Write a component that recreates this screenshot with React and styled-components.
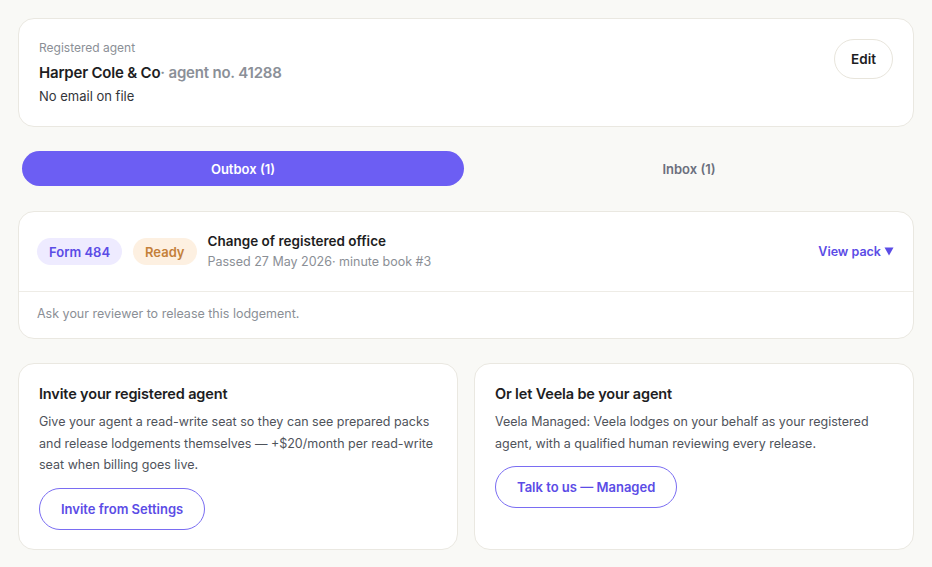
import styled, { createGlobalStyle } from 'styled-components';

const GlobalStyle = createGlobalStyle`
    body {
        margin: 0;
        background: #f9f9f6;
        font-family: Inter, "Noto Sans", sans-serif;
        color: #1d1d22;
    }
`;

const StyledPage = styled.div`
    display: flex;
    flex-direction: column;
    gap: 24px;
    padding: 18px;
`;

const StyledCard = styled.div`
    background: #fff;
    border: 1px solid #eae8e1;
    border-radius: 16px;
`;

const StyledAgentCard = styled(StyledCard)`
    display: flex;
    justify-content: space-between;
    align-items: flex-start;
    padding: 20px 20px 20px 20px;
`;

const StyledAgentInfo = styled.div`
    display: flex;
    flex-direction: column;
`;

const StyledLabel = styled.div`
    font-size: 12px;
    line-height: 18px;
    color: #8b8f96;
    margin-bottom: 5px;
`;

const StyledAgentName = styled.div`
    font-size: 15px;
    line-height: 22px;
    font-weight: 600;
    letter-spacing: -0.2px;
`;

const StyledMuted = styled.span`
    color: #8b9098;
    font-weight: 600;
`;

const StyledSmall = styled.div`
    font-size: 13px;
    line-height: 20px;
    margin-top: 2px;
    color: #33353a;
`;

const StyledPillButton = styled.button`
    font-family: inherit;
    background: #fff;
    border: 1px solid #e8e5dc;
    border-radius: 999px;
    height: 40px;
    padding: 0 16px;
    font-size: 13.5px;
    font-weight: 600;
    color: #1d1d22;
    cursor: pointer;
`;

const StyledTabs = styled.div`
    display: grid;
    grid-template-columns: 1fr 1fr;
    gap: 4px;
    padding: 0 4px 1px 4px;
`;

const StyledTab = styled.div`
    height: 35px;
    border-radius: 999px;
    display: flex;
    align-items: center;
    justify-content: center;
    font-size: 13px;
    font-weight: 600;
    background: ${p => (p.$active ? '#6c5ef3' : 'transparent')};
    color: ${p => (p.$active ? '#fff' : '#6b6f7d')};
`;

const StyledFormTop = styled.div`
    display: flex;
    align-items: center;
    padding: 19px 19px 19px 18px;
    border-bottom: 1px solid #eeece6;
`;

const StyledTag = styled.span`
    display: inline-flex;
    align-items: center;
    height: 27px;
    padding: 0 12px;
    border-radius: 999px;
    font-size: 13px;
    font-weight: 600;
    margin-right: 11px;
    background: ${p => (p.$tone === 'warn' ? '#fdf0e1' : '#eeebff')};
    color: ${p => (p.$tone === 'warn' ? '#c4803a' : '#5b4ce6')};
`;

const StyledFormText = styled.div`
    display: flex;
    flex-direction: column;
    flex: 1;
`;

const StyledFormTitle = styled.div`
    font-size: 13.5px;
    line-height: 20px;
    font-weight: 600;
`;

const StyledFormSub = styled.div`
    font-size: 12.5px;
    line-height: 21px;
    color: #8b8f96;
`;

const StyledViewPack = styled.a`
    font-size: 12.5px;
    font-weight: 600;
    color: #5b4ce6;
    cursor: pointer;
    display: flex;
    align-items: center;
    gap: 3px;
`;

const StyledFooter = styled.div`
    padding: 13px 18px 15px 18px;
    font-size: 12.5px;
    line-height: 18px;
    color: #8b8f96;
`;

const StyledGrid = styled.div`
    display: grid;
    grid-template-columns: 1fr 1fr;
    gap: 16px;
`;

const StyledOfferCard = styled(StyledCard)`
    display: flex;
    flex-direction: column;
    align-items: flex-start;
    padding: 19px 20px 19px 20px;
`;

const StyledOfferTitle = styled.div`
    font-size: 14.5px;
    line-height: 22px;
    font-weight: 600;
    letter-spacing: -0.15px;
    margin-bottom: 6px;
`;

const StyledOfferBody = styled.div`
    font-size: 12.5px;
    line-height: 21.5px;
    color: #4f535b;
    margin-bottom: 12px;
`;

const StyledOutlineButton = styled.button`
    font-family: inherit;
    background: #fff;
    border: 1px solid #7a6df2;
    border-radius: 999px;
    height: 42px;
    padding: 0 21px;
    font-size: 13px;
    font-weight: 600;
    color: #5b4ce6;
    cursor: pointer;
`;

const App = () => (
    <>
        <GlobalStyle />
        <StyledPage>
            <StyledAgentCard>
                <StyledAgentInfo>
                    <StyledLabel>Registered agent</StyledLabel>
                    <StyledAgentName>
                        Harper Cole &amp; Co<StyledMuted>· agent no. 41288</StyledMuted>
                    </StyledAgentName>
                    <StyledSmall>No email on file</StyledSmall>
                </StyledAgentInfo>
                <StyledPillButton>Edit</StyledPillButton>
            </StyledAgentCard>

            <StyledTabs>
                <StyledTab $active>Outbox (1)</StyledTab>
                <StyledTab>Inbox (1)</StyledTab>
            </StyledTabs>

            <StyledCard>
                <StyledFormTop>
                    <StyledTag>Form 484</StyledTag>
                    <StyledTag $tone="warn">Ready</StyledTag>
                    <StyledFormText>
                        <StyledFormTitle>Change of registered office</StyledFormTitle>
                        <StyledFormSub>Passed 27 May 2026· minute book #3</StyledFormSub>
                    </StyledFormText>
                    <StyledViewPack>
                        View pack
                        <svg width="10" height="9" viewBox="0 0 10 9">
                            <path d="M0.5 0.5 H9.5 L5 8.5 Z" fill="#5b4ce6" />
                        </svg>
                    </StyledViewPack>
                </StyledFormTop>
                <StyledFooter>Ask your reviewer to release this lodgement.</StyledFooter>
            </StyledCard>

            <StyledGrid>
                <StyledOfferCard>
                    <StyledOfferTitle>Invite your registered agent</StyledOfferTitle>
                    <StyledOfferBody>
                        Give your agent a read-write seat so they can see prepared packs and release lodgements themselves — +$20/month per read-write seat when billing goes live.
                    </StyledOfferBody>
                    <StyledOutlineButton>Invite from Settings</StyledOutlineButton>
                </StyledOfferCard>
                <StyledOfferCard>
                    <StyledOfferTitle>Or let Veela be your agent</StyledOfferTitle>
                    <StyledOfferBody>
                        Veela Managed: Veela lodges on your behalf as your registered agent, with a qualified human reviewing every release.
                    </StyledOfferBody>
                    <StyledOutlineButton>Talk to us — Managed</StyledOutlineButton>
                </StyledOfferCard>
            </StyledGrid>
        </StyledPage>
    </>
);

export default App;
